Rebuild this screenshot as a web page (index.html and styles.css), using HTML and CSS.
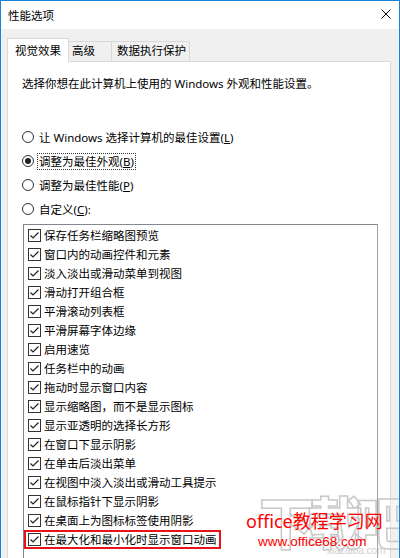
FILE: index.html
```html
<!DOCTYPE html>
<html lang="zh-CN">
<head>
<meta charset="utf-8">
<title>性能选项</title>
<link rel="stylesheet" href="styles.css">
</head>
<body>
<div class="window">
  <div class="titlebar">
    <span class="title">性能选项</span>
    <svg class="close" width="10" height="10" viewBox="0 0 10 10"><path d="M0.5 0.5 L9.5 9.5 M9.5 0.5 L0.5 9.5" stroke="#000" stroke-width="1" fill="none"/></svg>
  </div>
  <div class="body">
    <div class="tabs">
      <div class="tab active">视觉效果</div>
      <div class="tab t2">高级</div>
      <div class="tab t3">数据执行保护</div>
    </div>
    <div class="panel">
      <p class="intro">选择你想在此计算机上使用的 Windows 外观和性能设置。</p>
      <div class="radios">
        <div class="radio-row"><span class="radio"></span><span class="label">让 Windows 选择计算机的最佳设置(<u>L</u>)</span></div>
        <div class="radio-row"><span class="radio checked"></span><span class="label focus">调整为最佳外观(<u>B</u>)</span></div>
        <div class="radio-row"><span class="radio"></span><span class="label">调整为最佳性能(<u>P</u>)</span></div>
        <div class="radio-row"><span class="radio"></span><span class="label">自定义(<u>C</u>):</span></div>
      </div>
      <div class="listbox">
        <div class="item"><span class="cb"><svg width="11" height="11" viewBox="0 0 11 11"><path d="M1.5 5.5 L4 8 L9.5 2.5" stroke="#222" stroke-width="1.2" fill="none"/></svg></span><span>保存任务栏缩略图预览</span></div>
        <div class="item"><span class="cb"><svg width="11" height="11" viewBox="0 0 11 11"><path d="M1.5 5.5 L4 8 L9.5 2.5" stroke="#222" stroke-width="1.2" fill="none"/></svg></span><span>窗口内的动画控件和元素</span></div>
        <div class="item"><span class="cb"><svg width="11" height="11" viewBox="0 0 11 11"><path d="M1.5 5.5 L4 8 L9.5 2.5" stroke="#222" stroke-width="1.2" fill="none"/></svg></span><span>淡入淡出或滑动菜单到视图</span></div>
        <div class="item"><span class="cb"><svg width="11" height="11" viewBox="0 0 11 11"><path d="M1.5 5.5 L4 8 L9.5 2.5" stroke="#222" stroke-width="1.2" fill="none"/></svg></span><span>滑动打开组合框</span></div>
        <div class="item"><span class="cb"><svg width="11" height="11" viewBox="0 0 11 11"><path d="M1.5 5.5 L4 8 L9.5 2.5" stroke="#222" stroke-width="1.2" fill="none"/></svg></span><span>平滑滚动列表框</span></div>
        <div class="item"><span class="cb"><svg width="11" height="11" viewBox="0 0 11 11"><path d="M1.5 5.5 L4 8 L9.5 2.5" stroke="#222" stroke-width="1.2" fill="none"/></svg></span><span>平滑屏幕字体边缘</span></div>
        <div class="item"><span class="cb"><svg width="11" height="11" viewBox="0 0 11 11"><path d="M1.5 5.5 L4 8 L9.5 2.5" stroke="#222" stroke-width="1.2" fill="none"/></svg></span><span>启用速览</span></div>
        <div class="item"><span class="cb"><svg width="11" height="11" viewBox="0 0 11 11"><path d="M1.5 5.5 L4 8 L9.5 2.5" stroke="#222" stroke-width="1.2" fill="none"/></svg></span><span>任务栏中的动画</span></div>
        <div class="item"><span class="cb"><svg width="11" height="11" viewBox="0 0 11 11"><path d="M1.5 5.5 L4 8 L9.5 2.5" stroke="#222" stroke-width="1.2" fill="none"/></svg></span><span>拖动时显示窗口内容</span></div>
        <div class="item"><span class="cb"><svg width="11" height="11" viewBox="0 0 11 11"><path d="M1.5 5.5 L4 8 L9.5 2.5" stroke="#222" stroke-width="1.2" fill="none"/></svg></span><span>显示缩略图，而不是显示图标</span></div>
        <div class="item"><span class="cb"><svg width="11" height="11" viewBox="0 0 11 11"><path d="M1.5 5.5 L4 8 L9.5 2.5" stroke="#222" stroke-width="1.2" fill="none"/></svg></span><span>显示亚透明的选择长方形</span></div>
        <div class="item"><span class="cb"><svg width="11" height="11" viewBox="0 0 11 11"><path d="M1.5 5.5 L4 8 L9.5 2.5" stroke="#222" stroke-width="1.2" fill="none"/></svg></span><span>在窗口下显示阴影</span></div>
        <div class="item"><span class="cb"><svg width="11" height="11" viewBox="0 0 11 11"><path d="M1.5 5.5 L4 8 L9.5 2.5" stroke="#222" stroke-width="1.2" fill="none"/></svg></span><span>在单击后淡出菜单</span></div>
        <div class="item"><span class="cb"><svg width="11" height="11" viewBox="0 0 11 11"><path d="M1.5 5.5 L4 8 L9.5 2.5" stroke="#222" stroke-width="1.2" fill="none"/></svg></span><span>在视图中淡入淡出或滑动工具提示</span></div>
        <div class="item"><span class="cb"><svg width="11" height="11" viewBox="0 0 11 11"><path d="M1.5 5.5 L4 8 L9.5 2.5" stroke="#222" stroke-width="1.2" fill="none"/></svg></span><span>在鼠标指针下显示阴影</span></div>
        <div class="item"><span class="cb"><svg width="11" height="11" viewBox="0 0 11 11"><path d="M1.5 5.5 L4 8 L9.5 2.5" stroke="#222" stroke-width="1.2" fill="none"/></svg></span><span>在桌面上为图标标签使用阴影</span></div>
        <div class="item highlight"><span class="cb"><svg width="11" height="11" viewBox="0 0 11 11"><path d="M1.5 5.5 L4 8 L9.5 2.5" stroke="#222" stroke-width="1.2" fill="none"/></svg></span><span>在最大化和最小化时显示窗口动画</span></div>
      </div>
    </div>
  </div>
  <div class="wm-gray">下载吧</div>
  <div class="wm-gray-url">xiazaiba.com</div>
  <div class="wm-red">office教程学习网</div>
  <div class="wm-url">www.office68.com</div>
</div>
</body>
</html>
```

FILE: styles.css
```css
html, body {
  margin: 0;
  padding: 0;
}
body {
  width: 400px;
  height: 558px;
  overflow: hidden;
  font-family: "Noto Sans", "Noto Sans CJK SC", sans-serif;
  font-size: 11.5px;
  color: #000;
}
.window {
  position: relative;
  width: 400px;
  height: 558px;
  box-sizing: border-box;
  border: 1px solid #1883d7;
  border-bottom: none;
  background: #f0f0f0;
  overflow: hidden;
}
.titlebar {
  height: 28px;
  background: #fff;
  display: flex;
  align-items: center;
  justify-content: space-between;
  padding: 0 8px 0 7px;
}
.title {
  line-height: 16px;
  margin-top: 2px;
}
.close {
  display: block;
  margin-top: -2px;
}
.body {
  padding: 9px 8px 0 6px;
}
.tabs {
  display: flex;
  align-items: flex-end;
  height: 23px;
}
.tab {
  box-sizing: border-box;
  border: 1px solid #d9d9d9;
  border-bottom: none;
  line-height: 17px;
  height: 20px;
  background: #f0f0f0;
  white-space: nowrap;
}
.tab.active {
  position: relative;
  z-index: 1;
  width: 62px;
  height: 24px;
  margin-bottom: -1px;
  padding: 3px 0 0 7px;
  background: #fff;
}
.tab.t2 {
  width: 43px;
  border-left: none;
  padding-left: 3px;
}
.tab.t3 {
  width: 78px;
  border-left: none;
  padding-left: 5px;
}
.panel {
  box-sizing: border-box;
  width: 384px;
  height: 520px;
  background: #fff;
  border: 1px solid #d9d9d9;
  padding: 13px 0 0 14px;
}
.intro {
  margin: 0;
  line-height: 17px;
  white-space: nowrap;
}
.radios {
  margin-top: 33px;
}
.radio-row {
  display: flex;
  align-items: center;
  height: 24px;
}
.radio {
  box-sizing: border-box;
  width: 12px;
  height: 12px;
  border: 1px solid #333;
  border-radius: 50%;
  margin-right: 3px;
  display: flex;
  align-items: center;
  justify-content: center;
  flex: none;
}
.radio.checked::after {
  content: "";
  width: 6px;
  height: 6px;
  border-radius: 50%;
  background: #222;
}
.label {
  line-height: 15px;
  padding: 0 1px;
  border: 1px dotted transparent;
  white-space: nowrap;
}
.label.focus {
  border-color: #333;
}
.listbox {
  margin: 3px 0 0 1px;
  width: 355px;
  height: 400px;
  box-sizing: border-box;
  border: 1px solid #828790;
  border-right-color: #a0a0a0;
  background: #fff;
  padding-top: 1px;
}
.item {
  display: flex;
  align-items: center;
  height: 19px;
  padding-left: 4px;
  white-space: nowrap;
  line-height: 15px;
}
.item.highlight {
  box-sizing: border-box;
  width: 197px;
  border: 2px solid #e8121a;
  padding-left: 2px;
}
.cb {
  box-sizing: border-box;
  width: 13px;
  height: 13px;
  border: 1px solid #333;
  margin-right: 3px;
  flex: none;
  display: flex;
  align-items: center;
  justify-content: center;
}
.cb svg {
  display: block;
}
.wm-gray {
  position: absolute;
  left: 258px;
  top: 486px;
  font-family: "Noto Sans CJK SC", sans-serif;
  font-size: 56px;
  line-height: 66px;
  font-weight: 900;
  color: rgba(255,255,255,0.35);
  -webkit-text-stroke: 1.5px #c8c8c8;
  letter-spacing: -8px;
  white-space: nowrap;
}
.wm-gray-url {
  position: absolute;
  left: 326px;
  top: 544px;
  font-family: "Liberation Sans", sans-serif;
  font-size: 10px;
  line-height: 12px;
  color: #cfcfcf;
}
.wm-red {
  position: absolute;
  left: 245px;
  top: 509px;
  font-family: "Noto Sans", "Noto Sans CJK SC", sans-serif;
  font-size: 18px;
  line-height: 22px;
  color: #ff0000;
  white-space: nowrap;
}
.wm-url {
  position: absolute;
  left: 257px;
  top: 533px;
  font-family: "Liberation Sans", sans-serif;
  font-size: 13.5px;
  line-height: 16px;
  color: #ff0000;
  white-space: nowrap;
}
```
